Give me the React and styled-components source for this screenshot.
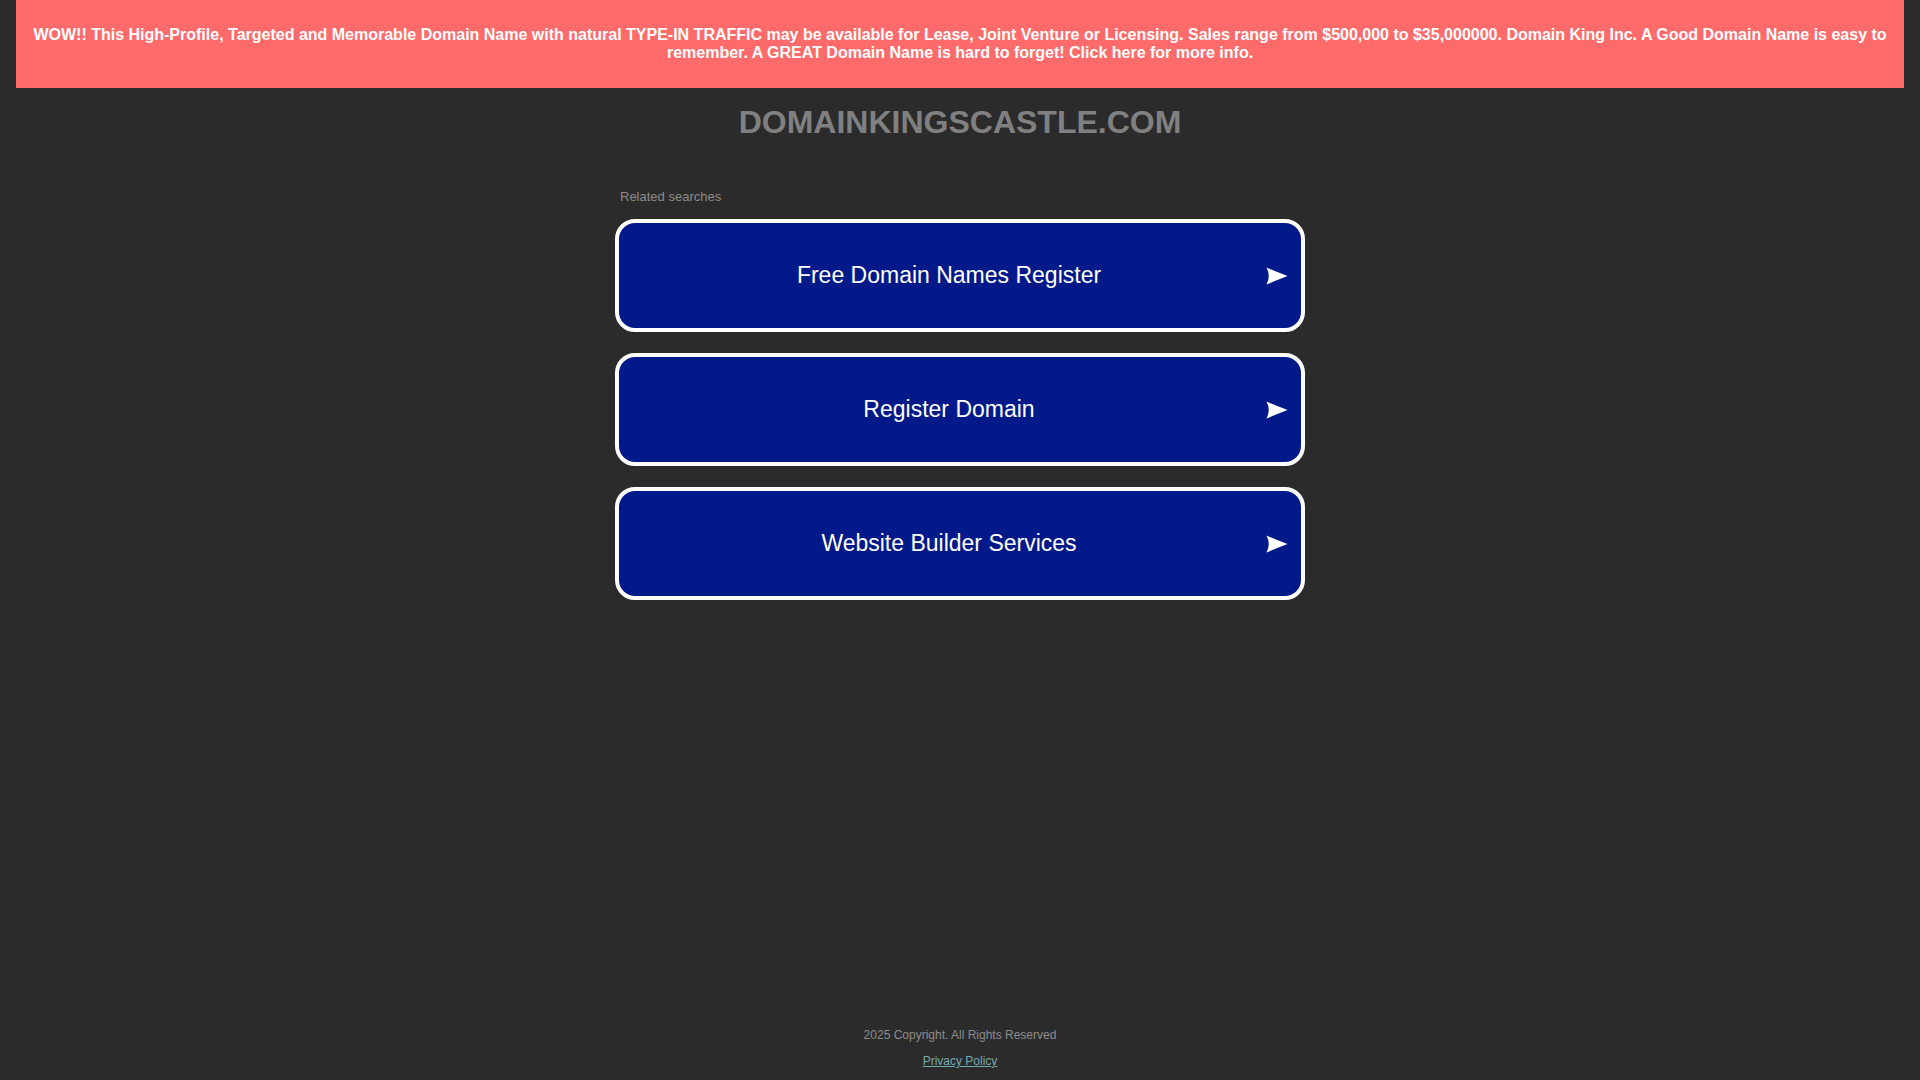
import React from "react";
import styled, { createGlobalStyle } from "styled-components";

const GlobalStyle = createGlobalStyle`
  html, body {
    margin: 0;
    padding: 0;
    background: #2b2b2b;
  }
  body {
    font-family: "Liberation Sans", Arial, sans-serif;
  }
  * {
    box-sizing: border-box;
  }
`;

const SEARCHES = [
  "Free Domain Names Register",
  "Register Domain",
  "Website Builder Services",
];

function Arrow() {
  return (
    <svg width="22" height="18" viewBox="0 0 22 18">
      <path d="M0.5 0.5 Q10 4.5 21.5 9 Q10 13.5 0.5 17.5 Q5 9 0.5 0.5 Z" fill="#ffffff" />
    </svg>
  );
}

function App() {
  return (
    <>
      <GlobalStyle />
      <Page>
        <Banner>
          WOW!! This High-Profile, Targeted and Memorable Domain Name with
          natural TYPE-IN TRAFFIC may be available for Lease, Joint Venture or
          Licensing. Sales range from $500,000 to $35,000000. Domain King Inc. A
          Good Domain Name is easy to remember. A GREAT Domain Name is hard to
          forget! Click here for more info.
        </Banner>
        <Title>DOMAINKINGSCASTLE.COM</Title>
        <Searches>
          <SearchesLabel>Related searches</SearchesLabel>
          {SEARCHES.map((term) => (
            <SearchButton key={term}>
              <SearchText>{term}</SearchText>
              <Arrow />
            </SearchButton>
          ))}
        </Searches>
        <Footer>
          <Copyright>2025 Copyright. All Rights Reserved</Copyright>
          <PolicyLink href="#">Privacy Policy</PolicyLink>
        </Footer>
      </Page>
    </>
  );
}

const Page = styled.div`
  min-height: 100vh;
  padding: 0 16px;
  display: flex;
  flex-direction: column;
`;

const Banner = styled.div`
  height: 88px;
  background: #ff6b6b;
  color: #ffffff;
  font-weight: bold;
  font-size: 16px;
  text-align: center;
  display: flex;
  align-items: center;
  justify-content: center;
  padding: 0 16px;
  cursor: pointer;
`;

const Title = styled.h1`
  margin: 16px 0 0;
  text-align: center;
  color: #808080;
  font-size: 32px;
  font-weight: bold;
`;

const Searches = styled.div`
  width: 690px;
  margin: 48px auto 0;
  display: flex;
  flex-direction: column;
`;

const SearchesLabel = styled.div`
  color: #8c8c8c;
  font-size: 13px;
  padding-left: 5px;
  margin-bottom: 15px;
`;

const SearchButton = styled.a`
  height: 113px;
  margin-bottom: 21px;
  background: #02198a;
  border: 4px solid #ffffff;
  border-radius: 20px;
  display: flex;
  align-items: center;
  padding: 0 13px;
  color: #ffffff;
  cursor: pointer;
  text-decoration: none;
`;

const SearchText = styled.span`
  flex: 1;
  text-align: center;
  font-size: 23px;
`;

const Footer = styled.footer`
  margin-top: auto;
  padding-bottom: 12px;
  display: flex;
  flex-direction: column;
  align-items: center;
  gap: 12px;
  font-size: 12px;
`;

const Copyright = styled.div`
  color: #8c8c8c;
`;

const PolicyLink = styled.a`
  color: #74a9b1;
  text-decoration: underline;
`;

export default App;
